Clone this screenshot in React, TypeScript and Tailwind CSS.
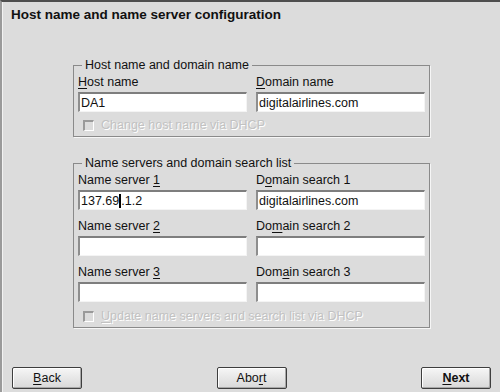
import type { ReactNode } from "react";

const font = { fontFamily: '"Liberation Sans", Arial, sans-serif' };

function U({ children }: { children: ReactNode }) {
  return <span className="underline underline-offset-2">{children}</span>;
}

function Field({ label, value, cursorAt }: { label: ReactNode; value?: string; cursorAt?: number }) {
  return (
    <div className="flex flex-col">
      <div className="h-4 leading-4 text-[12.5px] text-[#111]">{label}</div>
      <div className="mt-[2px] flex h-5 w-[169px] items-center border-t-2 border-l-2 border-r border-b border-t-[#7e7e7e] border-l-[#8e8e8e] border-r-[#f4f4f4] border-b-[#f4f4f4] bg-white pl-[1px] text-[12.5px] leading-4 text-[#111]">
        {value !== undefined && cursorAt !== undefined ? (
          <>
            {value.slice(0, cursorAt)}
            <span className="inline-block h-[14px] w-[2px] bg-black" />
            {value.slice(cursorAt)}
          </>
        ) : (
          value
        )}
      </div>
    </div>
  );
}

function DisabledCheck({ children }: { children: ReactNode }) {
  return (
    <div className="flex h-4 items-center gap-[7px] pl-[5px]">
      <span className="h-[11px] w-[11px] border-t-2 border-l-2 border-r border-b border-t-[#9a9a9a] border-l-[#9a9a9a] border-r-white border-b-white bg-[#dcdcdc]" />
      <span className="text-[12.5px] leading-4 text-[#c2c2c2] [text-shadow:1px_1px_0_#ffffff]">{children}</span>
    </div>
  );
}

function Group({ legend, children }: { legend: string; children: ReactNode }) {
  return (
    <fieldset className="ml-[70px] w-[357px] border border-[#8a8a8a] px-[4px] pb-[3px] shadow-[1px_1px_0_#f6f6f6]">
      <legend className="ml-[4px] px-[3px] text-[12.5px] leading-[14px] text-[#111]">{legend}</legend>
      {children}
    </fieldset>
  );
}

function Button({ children, bold }: { children: ReactNode; bold?: boolean }) {
  return (
    <button
      className={`flex h-[22px] w-[70px] items-center justify-center rounded-[2px] border border-[#3e3e3e] bg-gradient-to-b from-[#f6f6f6] to-[#d8d8d8] text-[12.5px] text-[#111] shadow-[inset_-1px_-1px_0_#a8a8a8,inset_1px_1px_0_#ffffff] ${bold ? "font-bold" : ""}`}
    >
      {children}
    </button>
  );
}

export default function App() {
  return (
    <div
      className="flex h-[392px] w-[500px] flex-col overflow-hidden border-t-2 border-l-2 border-t-[#4e4e4e] border-l-[#9a9a9a] bg-[#dcdcdc]"
      style={font}
    >
      <div className="flex flex-1 flex-col border-l border-l-[#f2f2f2]">
        <h1 className="pl-[8px] pt-[4px] text-[13.5px] font-bold leading-[17px] text-[#111]">
          Host name and name server configuration
        </h1>

        <div className="mt-[35px]">
          <Group legend="Host name and domain name">
            <div className="mt-[2px] flex gap-[9px]">
              <Field label={<><U>H</U>ost name</>} value="DA1" />
              <Field label={<><U>D</U>omain name</>} value="digitalairlines.com" />
            </div>
            <div className="mt-[5px]">
              <DisabledCheck>Change host name via DHCP</DisabledCheck>
            </div>
          </Group>
        </div>

        <div className="mt-[19px]">
          <Group legend="Name servers and domain search list">
            <div className="mt-[2px] flex flex-col gap-[8px]">
              <div className="flex gap-[9px]">
                <Field label={<>Name server <U>1</U></>} value="137.69.1.2" cursorAt={6} />
                <Field label={<>D<U>o</U>main search 1</>} value="digitalairlines.com" />
              </div>
              <div className="flex gap-[9px]">
                <Field label={<>Name server <U>2</U></>} />
                <Field label={<>Do<U>m</U>ain search 2</>} />
              </div>
              <div className="flex gap-[9px]">
                <Field label={<>Name server <U>3</U></>} />
                <Field label={<>Dom<U>a</U>in search 3</>} />
              </div>
            </div>
            <div className="mt-[6px]">
              <DisabledCheck>
                <U>U</U>pdate name servers and search list via DHCP
              </DisabledCheck>
            </div>
          </Group>
        </div>

        <div className="mt-auto flex items-center justify-between pb-[3px] pl-[9px] pr-[9px]">
          <Button><U>B</U>ack</Button>
          <Button>Abo<U>r</U>t</Button>
          <Button bold><U>N</U>ext</Button>
        </div>
      </div>
    </div>
  );
}
